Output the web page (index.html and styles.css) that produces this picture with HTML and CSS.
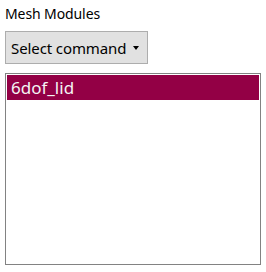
FILE: index.html
```html
<!DOCTYPE html>
<html>
<head>
  <link rel="stylesheet" href="styles.css">
</head>
<body>
  <div class="panel">
    <div class="label">Mesh Modules</div>
    <button class="command">
      <span class="command-text">Select command</span>
      <span class="caret"></span>
    </button>
    <div class="list">
      <div class="item selected">6dof_lid</div>
    </div>
  </div>
</body>
</html>
```

FILE: styles.css
```css
body {
  margin: 0;
  background: #fff;
  font-family: 'Noto Sans', sans-serif;
  color: #000;
}

.panel {
  padding: 3px 5px 0 5px;
  display: flex;
  flex-direction: column;
  align-items: flex-start;
}

.label {
  font-size: 14px;
  line-height: 22px;
  letter-spacing: -0.1px;
}

.command {
  margin-top: 6px;
  width: 143px;
  height: 33px;
  display: flex;
  align-items: center;
  justify-content: space-between;
  padding: 0 8px 0 5px;
  background: #e1e1e1;
  border: 1px solid #adadad;
  border-radius: 0;
  font-family: 'Noto Sans', sans-serif;
  font-size: 15px;
  color: #000;
  box-sizing: border-box;
}

.command-text {
  white-space: nowrap;
  letter-spacing: -0.1px;
}

.caret {
  width: 0;
  height: 0;
  border-left: 3.5px solid transparent;
  border-right: 3.5px solid transparent;
  border-top: 4px solid #000;
}

.list {
  margin-top: 9px;
  width: 256px;
  height: 192px;
  border: 1px solid #828282;
  padding: 1px;
  box-sizing: border-box;
}

.item {
  height: 25px;
  line-height: 25px;
  padding-left: 4px;
  font-size: 17px;
}

.selected {
  background: #930045;
  color: #f4f4f4;
}
```
